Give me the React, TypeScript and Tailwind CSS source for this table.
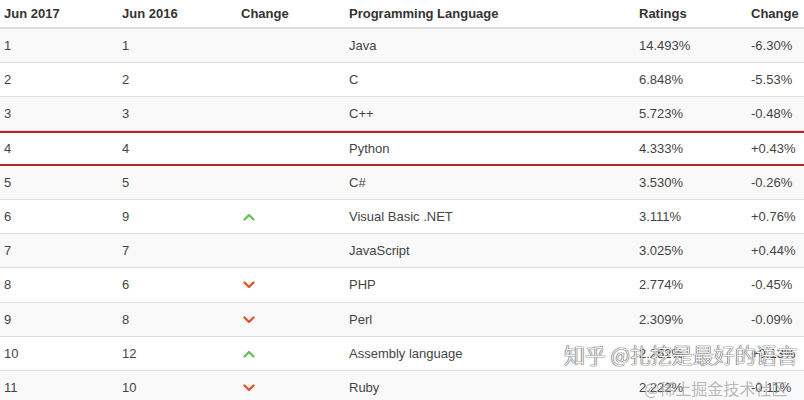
type Trend = 'up' | 'down' | null;

interface Row {
  now: string;
  prev: string;
  trend: Trend;
  lang: string;
  rating: string;
  change: string;
}

const ROWS: Row[] = [
  { now: '1', prev: '1', trend: null, lang: 'Java', rating: '14.493%', change: '-6.30%' },
  { now: '2', prev: '2', trend: null, lang: 'C', rating: '6.848%', change: '-5.53%' },
  { now: '3', prev: '3', trend: null, lang: 'C++', rating: '5.723%', change: '-0.48%' },
  { now: '4', prev: '4', trend: null, lang: 'Python', rating: '4.333%', change: '+0.43%' },
  { now: '5', prev: '5', trend: null, lang: 'C#', rating: '3.530%', change: '-0.26%' },
  { now: '6', prev: '9', trend: 'up', lang: 'Visual Basic .NET', rating: '3.111%', change: '+0.76%' },
  { now: '7', prev: '7', trend: null, lang: 'JavaScript', rating: '3.025%', change: '+0.44%' },
  { now: '8', prev: '6', trend: 'down', lang: 'PHP', rating: '2.774%', change: '-0.45%' },
  { now: '9', prev: '8', trend: 'down', lang: 'Perl', rating: '2.309%', change: '-0.09%' },
  { now: '10', prev: '12', trend: 'up', lang: 'Assembly language', rating: '2.252%', change: '+0.13%' },
  { now: '11', prev: '10', trend: 'down', lang: 'Ruby', rating: '2.222%', change: '-0.11%' },
];

const COLS = 'grid grid-cols-[118px_119px_108px_290px_112px_57px]';

function TrendIcon({ trend }: { trend: Trend }) {
  if (trend === 'up') {
    return (
      <svg width="12" height="8" viewBox="0 0 12 8" aria-hidden="true">
        <path d="M1.5 6.5L6 2L10.5 6.5" fill="none" stroke="#6cbf5f" strokeWidth="2.4" strokeLinecap="round" strokeLinejoin="round" />
      </svg>
    );
  }
  if (trend === 'down') {
    return (
      <svg width="12" height="8" viewBox="0 0 12 8" aria-hidden="true">
        <path d="M1.5 1.5L6 6L10.5 1.5" fill="none" stroke="#e0562e" strokeWidth="2.4" strokeLinecap="round" strokeLinejoin="round" />
      </svg>
    );
  }
  return null;
}

export default function App() {
  return (
    <div className="relative h-[400px] w-[804px] overflow-hidden bg-white font-['Liberation_Sans',Arial,sans-serif] text-[13px] text-[#444]">
      <div className={`${COLS} h-[29px] items-center border-b-2 border-[#dddddd] font-bold text-[#333]`}>
        <div className="pl-1">Jun 2017</div>
        <div className="pl-1">Jun 2016</div>
        <div className="pl-1">Change</div>
        <div className="pl-1">Programming Language</div>
        <div className="pl-1">Ratings</div>
        <div className="pl-1">Change</div>
      </div>
      {ROWS.map((row, i) => {
        const isPython = row.lang === 'Python';
        const stripe = i % 2 === 0 ? 'bg-[#f9f9f9]' : 'bg-white';
        const border = isPython
          ? 'h-[35px] border-y-2 border-[#b8232a] bg-white'
          : `${row.lang === 'PHP' ? 'h-[35px]' : 'h-[34px]'} border-b border-[#dddddd] ${stripe}`;
        return (
          <div key={row.now} className={`${COLS} items-center ${border}`}>
            <div className="pl-1">{row.now}</div>
            <div className="pl-1">{row.prev}</div>
            <div className="flex items-center pl-[6px]">
              <TrendIcon trend={row.trend} />
            </div>
            <div className="pl-1">{row.lang}</div>
            <div className="pl-1">{row.rating}</div>
            <div className="pl-1">{row.change}</div>
          </div>
        );
      })}

      <div className="pointer-events-none absolute left-[644px] top-[376px] font-['Noto_Sans_CJK_SC',sans-serif] text-[16px] text-[#a0a0a0] opacity-70">
        @稀土掘金技术社区
      </div>
      <div className="pointer-events-none absolute left-[564px] top-[339px] whitespace-nowrap font-['Noto_Sans_CJK_SC',sans-serif] text-[21px] font-light text-white [text-shadow:0_0_1px_#666,0_0_1px_#666,0_0_1px_#666,0_0_1px_#666]">
        知乎 @扎挖是最好的语言
      </div>
    </div>
  );
}
